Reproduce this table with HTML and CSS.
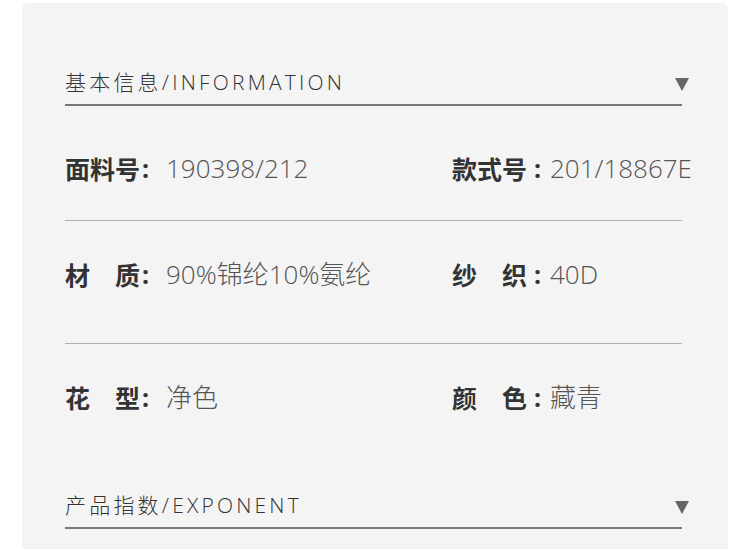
FILE: index.html
```html
<!DOCTYPE html>
<html lang="zh-CN">
<head>
<meta charset="utf-8">
<link rel="stylesheet" href="styles.css">
</head>
<body>
<div class="card">
  <div class="section-head head-first">
    <span class="head-title">基本信息/INFORMATION</span>
    <span class="tri"></span>
  </div>
  <div class="row row-first">
    <div class="cell cell-left"><span class="label">面料号</span><span class="colon">:</span><span class="value">190398/212</span></div>
    <div class="cell cell-right"><span class="label">款式号</span><span class="colon">:</span><span class="value">201/18867E</span></div>
  </div>
  <div class="row">
    <div class="cell cell-left"><span class="label">材质</span><span class="colon">:</span><span class="value">90%锦纶10%氨纶</span></div>
    <div class="cell cell-right"><span class="label">纱织</span><span class="colon">:</span><span class="value">40D</span></div>
  </div>
  <div class="row row-last">
    <div class="cell cell-left"><span class="label">花型</span><span class="colon">:</span><span class="value">净色</span></div>
    <div class="cell cell-right"><span class="label">颜色</span><span class="colon">:</span><span class="value">藏青</span></div>
  </div>
  <div class="section-head">
    <span class="head-title">产品指数/EXPONENT</span>
    <span class="tri"></span>
  </div>
</div>
</body>
</html>
```
FILE: styles.css
```css
html, body {
  margin: 0;
  padding: 0;
  background: #ffffff;
}
body {
  font-family: "Open Sans", "Noto Sans CJK SC", sans-serif;
  overflow: hidden;
  height: 549px;
}
.card {
  margin: 3px 22px 0;
  background: #f4f4f4;
  border-radius: 6px 6px 0 0;
  padding: 0 46px 40px 43px;
}
.section-head {
  display: flex;
  justify-content: space-between;
  align-items: center;
  padding: 0 0 10px;
  border-bottom: 2px solid #777777;
}
.head-first {
  padding-top: 67px;
}
.head-title {
  font-size: 21px;
  line-height: 24px;
  letter-spacing: 3.2px;
  color: #333333;
  font-weight: 300;
}
.tri {
  width: 0;
  height: 0;
  border-left: 7.5px solid transparent;
  border-right: 7.5px solid transparent;
  border-top: 13px solid #666666;
  margin-right: -7px;
  margin-top: 5px;
}
.row {
  display: grid;
  grid-template-columns: 387px 1fr;
  padding: 38px 0 54px;
  border-bottom: 1px solid #b0b0b0;
}
.row-first {
  padding: 47px 0 37px;
}
.row-last {
  border-bottom: none;
  padding-bottom: 81px;
}
.cell {
  display: flex;
  align-items: center;
  height: 30px;
  white-space: nowrap;
}
.label {
  display: inline-block;
  width: 75px;
  font-family: "Noto Sans CJK SC", sans-serif;
  font-size: 25px;
  line-height: 30px;
  font-weight: 700;
  color: #333333;
  text-align: justify;
  text-align-last: justify;
}
.colon {
  font-family: "Noto Sans", sans-serif;
  font-size: 25px;
  line-height: 30px;
  font-weight: 700;
  color: #333333;
  margin-left: 2px;
  margin-right: 17px;
}
.cell-right .colon {
  margin-left: 7px;
  margin-right: 9px;
}
.value {
  font-size: 26px;
  line-height: 30px;
  color: #555555;
  font-weight: 300;
}
```
